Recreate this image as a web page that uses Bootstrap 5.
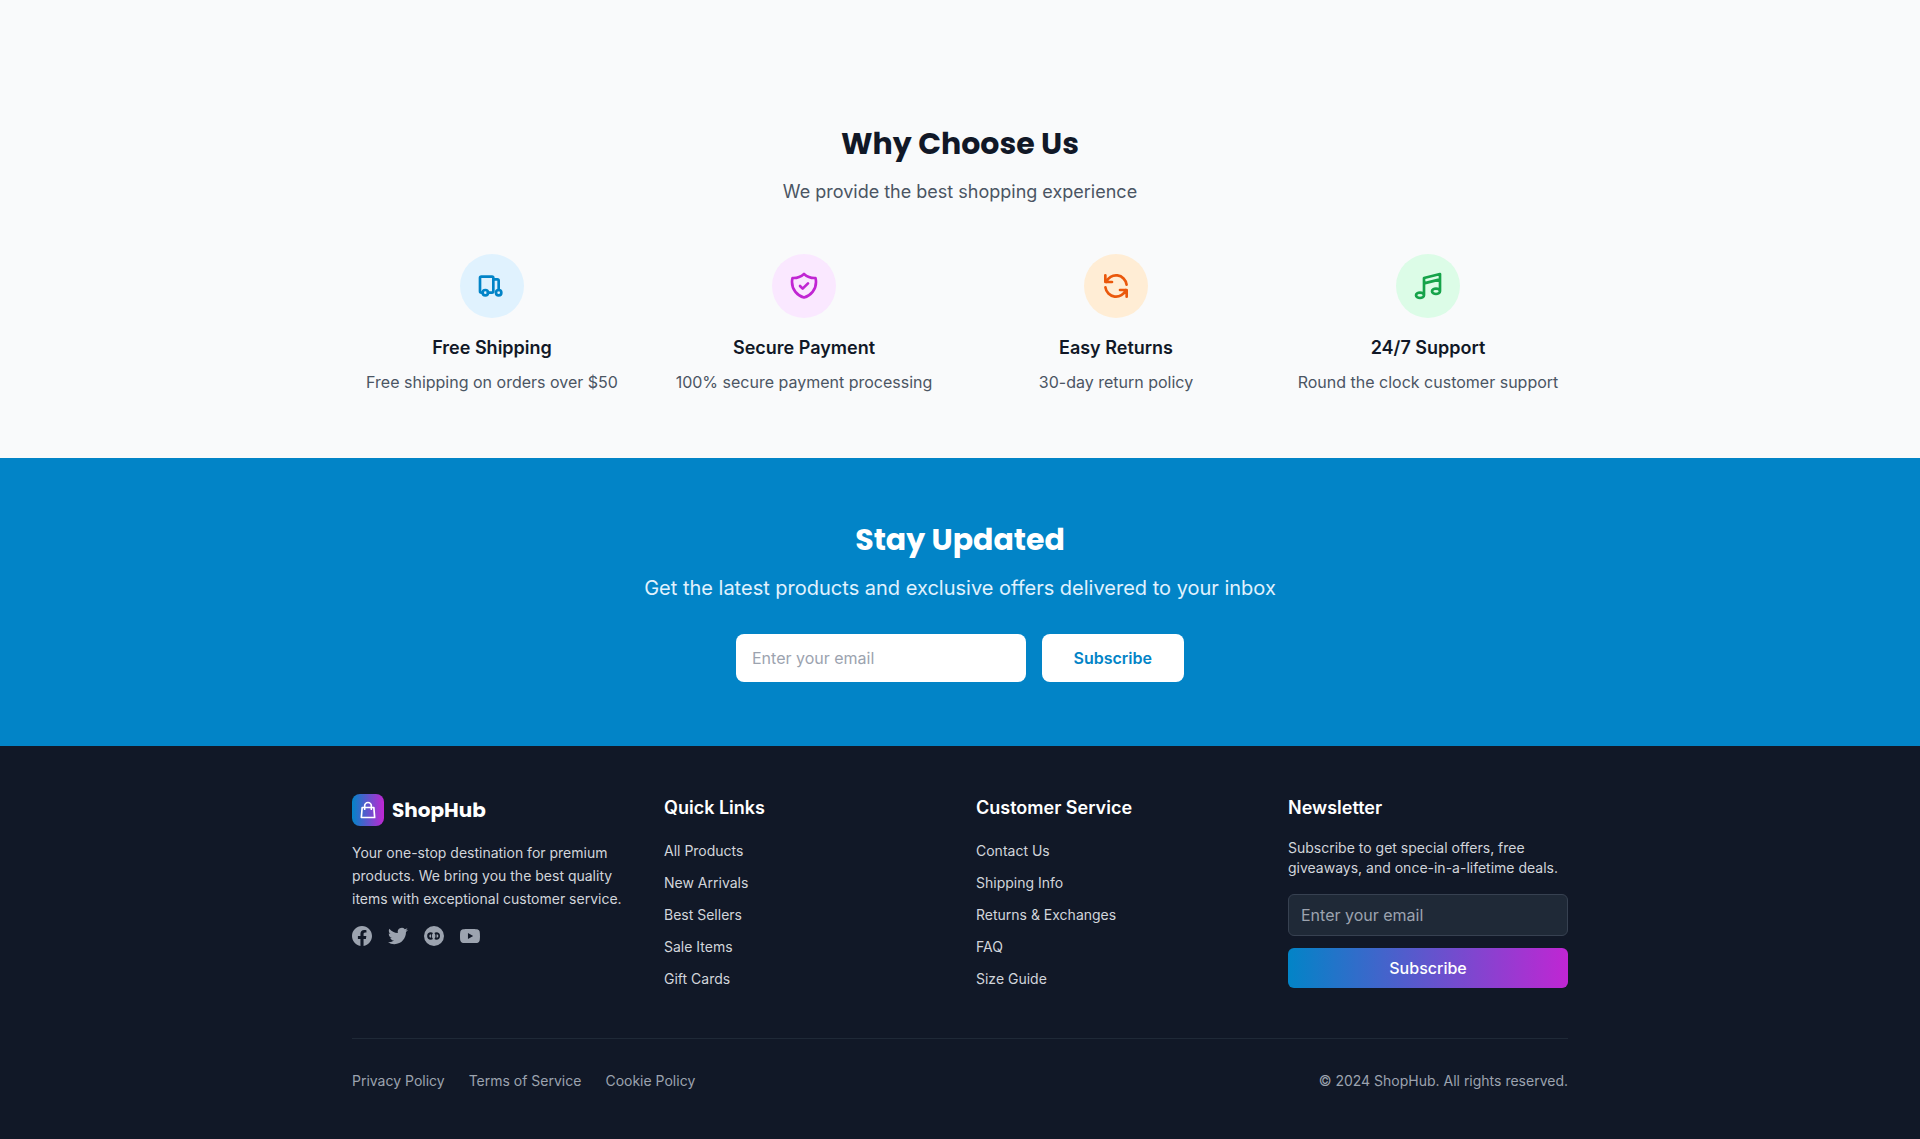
<!DOCTYPE html>
<html lang="en">
<head>
<meta charset="utf-8">
<meta name="viewport" content="width=device-width, initial-scale=1">
<title>ShopHub</title>
<link href="https://cdn.jsdelivr.net/npm/bootstrap@5.3.0/dist/css/bootstrap.min.css" rel="stylesheet">
<style>
  body { font-family: Inter, "Liberation Sans", sans-serif; font-size: 16px; line-height: 24px; color: #111827; background: #f9fafb; }
  .shell { max-width: 1280px; padding-left: 32px; padding-right: 32px; }
  .shell > .row { --bs-gutter-x: 32px; }
  .display-face { font-family: Poppins, Inter, sans-serif; font-weight: 700; }
  .section-title { font-size: 30px; line-height: 36px; margin-bottom: 16px; }
  .features { padding: 126px 0 64px; background: #f9fafb; }
  .features .intro { font-size: 18px; line-height: 28px; color: #4b5563; margin-bottom: 48px; }
  .feature-icon { width: 64px; height: 64px; margin-bottom: 16px; }
  .tone-sky { background: #e0f2fe; color: #0284c7; }
  .tone-pink { background: #fae8ff; color: #c026d3; }
  .tone-orange { background: #ffedd5; color: #ea580c; }
  .tone-green { background: #dcfce7; color: #16a34a; }
  .block-title { font-size: 18px; line-height: 28px; font-weight: 600; }
  .feature-text { color: #4b5563; }
  .line-icon { fill: none; stroke: currentColor; stroke-width: 2; stroke-linecap: round; stroke-linejoin: round; }
  .updates { background: #0284c7; color: #fff; padding: 64px 0; }
  .updates .intro { font-size: 20px; line-height: 28px; color: #e0f2fe; margin-bottom: 32px; }
  .updates form { max-width: 448px; }
  .updates .form-control { min-width: 0; height: 48px; padding: 12px 16px; border: 0; border-radius: 8px; }
  .updates .btn { height: 48px; padding: 12px 32px; border: 0; border-radius: 8px; background: #fff; color: #0284c7; font-weight: 600; line-height: 24px; }
  .form-control::placeholder { color: #9ca3af; }
  .site-footer { background: #111827; color: #d1d5db; padding: 48px 0; font-size: 14px; line-height: 20px; }
  .site-footer a { color: inherit; text-decoration: none; }
  .site-footer a:hover { color: #fff; }
  .site-footer .block-title { color: #fff; margin-bottom: 16px; }
  .brand-tile { width: 32px; height: 32px; border-radius: 8px; color: #fff; background: linear-gradient(90deg, #0284c7, #c026d3); }
  .brand-name { font-size: 20px; line-height: 28px; color: #fff; }
  .about { line-height: 1.625; margin-bottom: 16px; }
  .muted-links { color: #9ca3af; }
  .link-list li { line-height: 24px; padding-top: 1px; height: 24px; margin-bottom: 8px; }
  .link-list li:last-child { margin-bottom: 0; }
  .site-footer .form-control { height: 42px; padding: 8px 12px; background: #1f2937; border: 1px solid #374151; border-radius: 6px; color: #fff; line-height: 24px; }
  .site-footer .btn { height: 40px; margin-top: 12px; padding: 8px 16px; border: 0; border-radius: 6px; color: #fff; font-weight: 500; line-height: 24px; background: linear-gradient(90deg, #0284c7, #c026d3); }
  .legal { border-top: 1px solid #1f2937; margin-top: 48px; padding-top: 32px; color: #9ca3af; }
</style>
</head>
<body>
<main>
  <section class="features text-center">
    <div class="container-fluid shell">
      <h2 class="section-title display-face">Why Choose Us</h2>
      <p class="intro">We provide the best shopping experience</p>
      <div class="row row-cols-1 row-cols-sm-2 row-cols-lg-4 gy-4 gy-lg-0">
        <div class="col">
          <div class="feature-icon tone-sky rounded-circle d-flex align-items-center justify-content-center mx-auto">
            <svg class="line-icon" width="32" height="32" viewBox="0 0 24 24" aria-hidden="true"><circle cx="7" cy="17" r="2"/><circle cx="17" cy="17" r="2"/><path d="M13 16V6a1 1 0 00-1-1H4a1 1 0 00-1 1v10a1 1 0 001 1h1m8-1a1 1 0 01-1 1H9m4-1V7h3a1 1 0 011 1v7"/></svg>
          </div>
          <h3 class="block-title mb-2">Free Shipping</h3>
          <p class="feature-text mb-0">Free shipping on orders over $50</p>
        </div>
        <div class="col">
          <div class="feature-icon tone-pink rounded-circle d-flex align-items-center justify-content-center mx-auto">
            <svg class="line-icon" width="32" height="32" viewBox="0 0 24 24" aria-hidden="true"><path d="M9 12l2 2 4-4m5.618-4.016A11.955 11.955 0 0112 2.944a11.955 11.955 0 01-8.618 3.04A12.02 12.02 0 003 9c0 5.591 3.824 10.29 9 11.622 5.176-1.332 9-6.03 9-11.622 0-1.042-.133-2.052-.382-3.016z"/></svg>
          </div>
          <h3 class="block-title mb-2">Secure Payment</h3>
          <p class="feature-text mb-0">100% secure payment processing</p>
        </div>
        <div class="col">
          <div class="feature-icon tone-orange rounded-circle d-flex align-items-center justify-content-center mx-auto">
            <svg class="line-icon" width="32" height="32" viewBox="0 0 24 24" aria-hidden="true"><path d="M4 4v5h.582m15.356 2A8.001 8.001 0 004.582 9m0 0H9m11 11v-5h-.581m0 0a8.003 8.003 0 01-15.357-2m15.357 2H15"/></svg>
          </div>
          <h3 class="block-title mb-2">Easy Returns</h3>
          <p class="feature-text mb-0">30-day return policy</p>
        </div>
        <div class="col">
          <div class="feature-icon tone-green rounded-circle d-flex align-items-center justify-content-center mx-auto">
            <svg class="line-icon" width="32" height="32" viewBox="0 0 24 24" aria-hidden="true"><path d="M9 19V6l12-3v13M9 19c0 1.105-1.343 2-3 2s-3-.895-3-2 1.343-2 3-2 3 .895 3 2zm12-3c0 1.105-1.343 2-3 2s-3-.895-3-2 1.343-2 3-2 3 .895 3 2zM9 10l12-3"/></svg>
          </div>
          <h3 class="block-title mb-2">24/7 Support</h3>
          <p class="feature-text mb-0">Round the clock customer support</p>
        </div>
      </div>
    </div>
  </section>

  <section class="updates text-center">
    <div class="container-fluid shell">
      <h2 class="section-title display-face">Stay Updated</h2>
      <p class="intro">Get the latest products and exclusive offers delivered to your inbox</p>
      <form class="d-flex gap-3 mx-auto">
        <input class="form-control flex-fill" type="email" aria-label="Email address" placeholder="Enter your email">
        <button class="btn flex-shrink-0" type="submit">Subscribe</button>
      </form>
    </div>
  </section>
</main>

<footer class="site-footer">
  <div class="container-fluid shell">
    <div class="row row-cols-1 row-cols-md-2 row-cols-lg-4 gy-4 gy-lg-0">
      <div class="col">
        <a class="d-flex align-items-center gap-2 mb-3" href="#">
          <span class="brand-tile d-flex align-items-center justify-content-center">
            <svg class="line-icon" width="20" height="20" viewBox="0 0 24 24" aria-hidden="true"><path d="M16 11V7a4 4 0 00-8 0v4M5 9h14l1 12H4L5 9z"/></svg>
          </span>
          <span class="brand-name display-face">ShopHub</span>
        </a>
        <p class="about">Your one-stop destination for premium products. We bring you the best quality items with exceptional customer service.</p>
        <div class="muted-links d-flex gap-3">
          <a class="d-flex" href="#" aria-label="Facebook"><svg width="20" height="20" viewBox="0 0 24 24" fill="currentColor"><path d="M24 12.073c0-6.627-5.373-12-12-12s-12 5.373-12 12c0 5.99 4.388 10.954 10.125 11.854v-8.385H7.078v-3.47h3.047V9.43c0-3.007 1.792-4.669 4.533-4.669 1.312 0 2.686.235 2.686.235v2.953H15.83c-1.491 0-1.956.925-1.956 1.874v2.25h3.328l-.532 3.47h-2.796v8.385C19.612 23.027 24 18.062 24 12.073z"/></svg></a>
          <a class="d-flex" href="#" aria-label="Twitter"><svg width="20" height="20" viewBox="0 0 24 24" fill="currentColor"><path d="M23.953 4.57a10 10 0 01-2.825.775 4.958 4.958 0 002.163-2.723c-.951.555-2.005.959-3.127 1.184a4.92 4.92 0 00-8.384 4.482C7.69 8.095 4.067 6.13 1.64 3.162a4.822 4.822 0 00-.666 2.475c0 1.71.87 3.213 2.188 4.096a4.904 4.904 0 01-2.228-.616v.06a4.923 4.923 0 003.946 4.827 4.996 4.996 0 01-2.212.085 4.936 4.936 0 004.604 3.417 9.867 9.867 0 01-6.102 2.105c-.39 0-.779-.023-1.17-.067a13.995 13.995 0 007.557 2.209c9.053 0 13.998-7.496 13.998-13.985 0-.21 0-.42-.015-.63A9.935 9.935 0 0024 4.59z"/></svg></a>
          <a class="d-flex" href="#" aria-label="Instagram"><svg width="20" height="20" viewBox="0 0 24 24" fill="currentColor" fill-rule="evenodd"><path d="M12 0a12 12 0 100 24 12 12 0 000-24zM8.2 7.6a4.4 4.4 0 000 8.8c.9 0 1.800-.3 2.500-.8a6.200 6.200 0 010-7.200c-.7-.5-1.600-.8-2.500-.8zm6.600 0a4.400 4.400 0 010 8.800c-.9 0-1.800-.3-2.300-.8a6.200 6.200 0 000-7.200c.5-.5 1.400-.8 2.300-.8zM8.500 9.800a2.200 2.200 0 000 4.400zm6.600 0a2.200 2.200 0 010 4.400z"/></svg></a>
          <a class="d-flex" href="#" aria-label="YouTube"><svg width="20" height="20" viewBox="0 0 24 24" fill="currentColor"><path d="M23.498 6.186a3.016 3.016 0 00-2.122-2.136C19.505 3.545 12 3.545 12 3.545s-7.505 0-9.377.505A3.017 3.017 0 00.502 6.186C0 8.07 0 12 0 12s0 3.93.502 5.814a3.016 3.016 0 002.122 2.136c1.871.505 9.376.505 9.376.505s7.505 0 9.377-.505a3.015 3.015 0 002.122-2.136C24 15.93 24 12 24 12s0-3.93-.502-5.814zM9.545 15.568V8.432L15.818 12l-6.273 3.568z"/></svg></a>
        </div>
      </div>
      <div class="col">
        <h3 class="block-title">Quick Links</h3>
        <ul class="link-list list-unstyled mb-0">
          <li><a href="#">All Products</a></li>
          <li><a href="#">New Arrivals</a></li>
          <li><a href="#">Best Sellers</a></li>
          <li><a href="#">Sale Items</a></li>
          <li><a href="#">Gift Cards</a></li>
        </ul>
      </div>
      <div class="col">
        <h3 class="block-title">Customer Service</h3>
        <ul class="link-list list-unstyled mb-0">
          <li><a href="#">Contact Us</a></li>
          <li><a href="#">Shipping Info</a></li>
          <li><a href="#">Returns &amp; Exchanges</a></li>
          <li><a href="#">FAQ</a></li>
          <li><a href="#">Size Guide</a></li>
        </ul>
      </div>
      <div class="col">
        <h3 class="block-title">Newsletter</h3>
        <p class="mb-3">Subscribe to get special offers, free giveaways, and once-in-a-lifetime deals.</p>
        <form>
          <input class="form-control" type="email" aria-label="Email address" placeholder="Enter your email">
          <button class="btn w-100" type="submit">Subscribe</button>
        </form>
      </div>
    </div>
    <div class="legal d-flex flex-wrap justify-content-between gap-3">
      <div class="d-flex flex-wrap gap-4">
        <a href="#">Privacy Policy</a>
        <a href="#">Terms of Service</a>
        <a href="#">Cookie Policy</a>
      </div>
      <p class="mb-0">© 2024 ShopHub. All rights reserved.</p>
    </div>
  </div>
</footer>
<script src="https://cdn.jsdelivr.net/npm/bootstrap@5.3.0/dist/js/bootstrap.bundle.min.js"></script>
</body>
</html>
